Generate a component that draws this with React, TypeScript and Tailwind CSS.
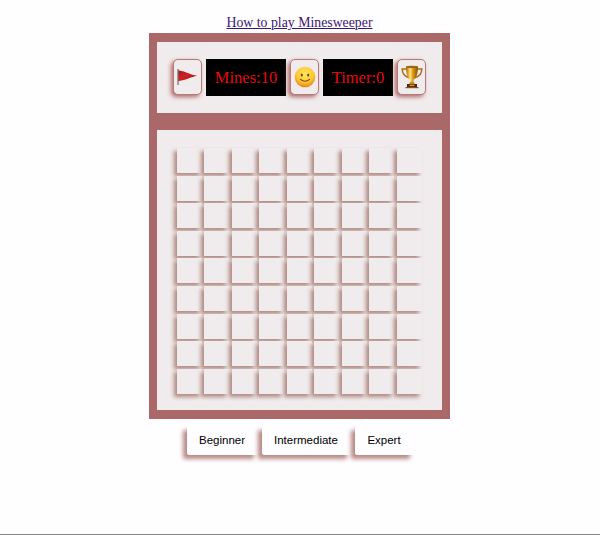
import type { ReactNode } from "react";

function Flag() {
  return (
    <svg viewBox="0 0 22 20" className="h-5 w-[22px]">
      <defs>
        <linearGradient id="flag" x1="0" y1="0" x2="1" y2="1">
          <stop offset="0" stopColor="#a81420" />
          <stop offset=".45" stopColor="#cf2424" />
          <stop offset="1" stopColor="#8e0d12" />
        </linearGradient>
      </defs>
      <path d="M1.3 3.200C5.500 4 8.500 5 11.500 6.300c2.500 1.200 5.300 1.900 8.600 2.400-3 .8-5.500 1.500-8.300 2.600-3.200 1.300-6.500 2.200-10.500 2.900z" fill="url(#flag)" />
      <path d="M1 2v16" stroke="#5b4848" strokeWidth="1" />
    </svg>
  );
}

function Smile() {
  return (
    <svg viewBox="0 0 22 22" className="h-[22px] w-[22px]">
      <defs>
        <radialGradient id="face" cx=".5" cy=".35" r=".68">
          <stop offset="0" stopColor="#ffe95c" />
          <stop offset=".6" stopColor="#ffc832" />
          <stop offset="1" stopColor="#e07c12" />
        </radialGradient>
      </defs>
      <circle cx="11" cy="11" r="10.300" fill="url(#face)" />
      <ellipse cx="7.800" cy="9" rx="1" ry="1.600" fill="#6b3c08" />
      <ellipse cx="14.200" cy="9" rx="1" ry="1.600" fill="#6b3c08" />
      <path d="M6.500 13.300q4.500 3.800 9 0" fill="none" stroke="#7b430a" strokeWidth="1.100" strokeLinecap="round" />
    </svg>
  );
}

function Trophy() {
  return (
    <svg viewBox="0 0 22 24" className="h-6 w-[22px]">
      <defs>
        <linearGradient id="gold">
          <stop offset="0" stopColor="#a96300" />
          <stop offset=".35" stopColor="#ffe573" />
          <stop offset=".6" stopColor="#d69312" />
          <stop offset="1" stopColor="#875000" />
        </linearGradient>
      </defs>
      <path d="M6 4H1.200c0 4.500 2.500 7.500 7 8.700M16 4h4.800c0 4.500-2.500 7.500-7 8.700" fill="none" stroke="#a96f14" strokeWidth="1.500" />
      <path d="M5 1.500h12c0 6-1.200 11.500-4.500 13.300V18h-3v-3.200C6.200 13 5 7.500 5 1.500z" fill="url(#gold)" />
      <ellipse cx="11" cy="1.900" rx="6" ry="1.100" fill="#9c6414" />
      <path d="M9 17h4l1 2.500H8z" fill="#c98b16" />
      <path d="M6 19h10v3H6z" fill="#4b2416" />
      <path d="M8.500 19.700h5v1.400h-5z" fill="#d7a13a" />
      <path d="M4.500 22h13v1.200h-13z" fill="#8b5218" />
    </svg>
  );
}

function IconButton({ children }: { children: ReactNode }) {
  return (
    <button className="flex h-9 w-[29px] shrink-0 items-center justify-center rounded-[5px] border border-[#b87878] bg-[#f0ebec] shadow-[-2px_2px_4px_#b06a6a]">
      {children}
    </button>
  );
}

const cells = Array.from({ length: 81 }, (_, i) => i);
const levelClass =
  "h-[29px] rounded-[2px] bg-[#fefdff] text-center font-['Liberation_Sans',Arial,sans-serif] text-[11.5px] leading-[29px] text-black shadow-[-4px_4px_4px_#b98a84]";
const counterClass =
  "ml-1 h-[37px] bg-black text-center text-[16.5px] leading-[37px] text-[#e80b0b]";

export default function App() {
  return (
    <main className="flex h-[535px] w-[600px] flex-col items-center border-b border-[#858585] bg-[#fefdff] pt-[14px] pr-px font-['Liberation_Serif','Times_New_Roman',serif]">
      <a href="#" className="h-[19px] text-[13.8px] leading-[18px] text-[#3c1670] underline">
        How to play Minesweeper
      </a>
      <section className="flex h-[386px] w-[301px] shrink-0 flex-col gap-[17px] bg-[#aa6868] px-2 pt-[9px] pb-[9px]">
        <header className="flex h-[71px] w-[285px] shrink-0 items-center bg-[#f0ebec] pb-px pl-4">
          <IconButton><Flag /></IconButton>
          <div className={`${counterClass} w-20`}>Mines:10</div>
          <div className="ml-1"><IconButton><Smile /></IconButton></div>
          <div className={`${counterClass} w-[70px]`}>Timer:0</div>
          <div className="ml-1"><IconButton><Trophy /></IconButton></div>
        </header>
        <div className="h-[280px] w-[285px] bg-[#f0ebec] pt-[18px] pl-[19.5px]">
          <div className="grid w-[245.5px] grid-cols-9 gap-x-[2.5px] gap-y-[2.6px]">
            {cells.map((id) => (
              <button key={id} className="h-[25px] bg-[#f0ebec] shadow-[-3px_3px_4px_#b08a82]" />
            ))}
          </div>
        </div>
      </section>
      <nav className="mt-[7px] flex gap-1 pl-px">
        <button className={`${levelClass} w-[71px]`}>Beginner</button>
        <button className={`${levelClass} w-[89px]`}>Intermediate</button>
        <button className={`${levelClass} w-[59px]`}>Expert</button>
      </nav>
    </main>
  );
}
